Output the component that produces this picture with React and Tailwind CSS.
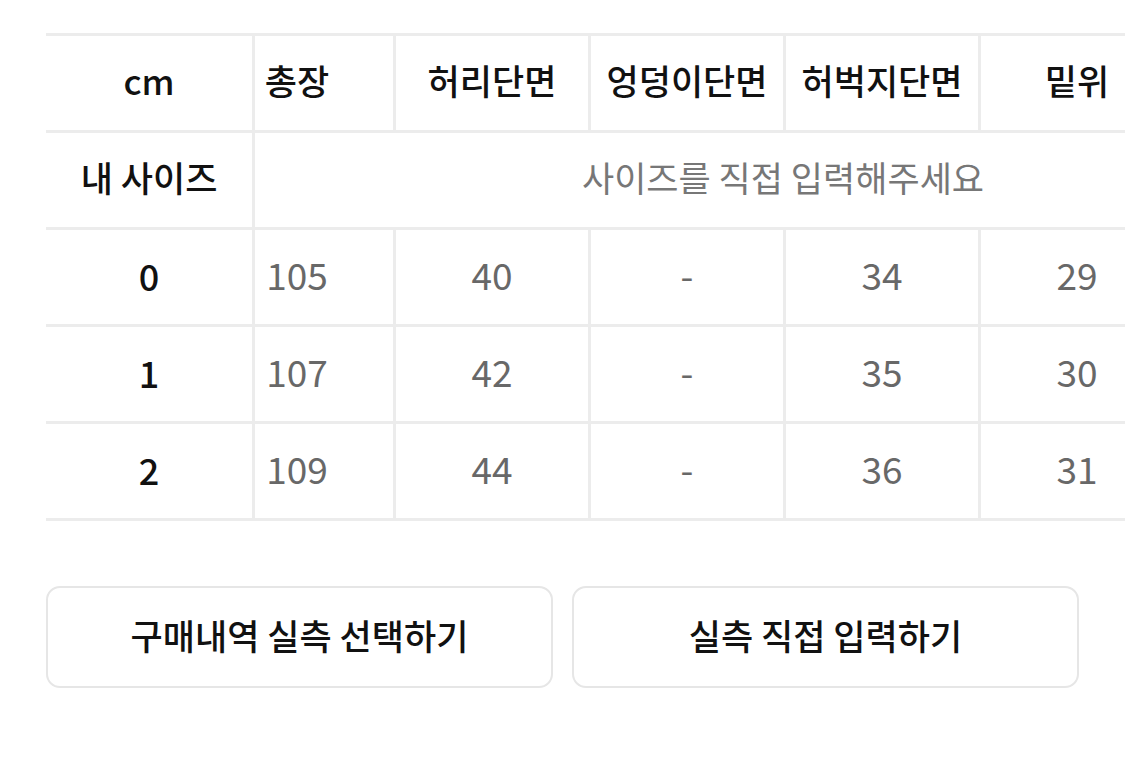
import React from "react";

const columns = ["총장", "허리단면", "엉덩이단면", "허벅지단면", "밑위", "밑단단면"];

const sizes = [
  { name: "0", values: ["105", "40", "-", "34", "29", "20"] },
  { name: "1", values: ["107", "42", "-", "35", "30", "21"] },
  { name: "2", values: ["109", "44", "-", "36", "31", "22"] },
];

export default function App() {
  return (
    <div
      className="w-[1125px] h-[761px] bg-white pt-[33px] overflow-hidden"
      style={{ fontFamily: '"Noto Sans CJK KR", "Noto Sans", sans-serif' }}
    >
      {/* size table: first column sticks, the rest is scrolled a bit */}
      <div className="flex ml-[46px]">
        <div className="w-[209px] shrink-0 border-t-[3px] border-r-[3px] border-[#ececec] text-[35px] font-medium text-[#111]">
          <div className="h-[97px] pb-[5px] border-b-[3px] border-[#ececec] flex items-center justify-center">cm</div>
          <div className="h-[97px] pb-[5px] border-b-[3px] border-[#ececec] flex items-center justify-center">내 사이즈</div>
          {sizes.map((s) => (
            <div key={s.name} className="h-[97px] pb-[5px] border-b-[3px] border-[#ececec] flex items-center justify-center text-[36px]">
              {s.name}
            </div>
          ))}
        </div>

        <div className="flex-1 min-w-0 overflow-hidden border-t-[3px] border-[#ececec]">
          <div className="w-[1170px] -ml-[57px] text-[35px]">
            <div className="flex h-[97px] border-b-[3px] border-[#ececec] font-medium text-[#111]">
              {columns.map((c) => (
                <div key={c} className="w-[195px] pb-[5px] shrink-0 border-l-[3px] border-[#ececec] flex items-center justify-center">
                  {c}
                </div>
              ))}
            </div>
            <div className="h-[97px] pb-[5px] border-b-[3px] border-[#ececec] flex items-center justify-center text-[#777]">
              사이즈를 직접 입력해주세요
            </div>
            {sizes.map((s) => (
              <div key={s.name} className="flex h-[97px] border-b-[3px] border-[#ececec] text-[#686868] text-[37px]">
                {s.values.map((v, i) => (
                  <div key={i} className="w-[195px] pb-[5px] shrink-0 border-l-[3px] border-[#ececec] flex items-center justify-center">
                    {v}
                  </div>
                ))}
              </div>
            ))}
          </div>
        </div>
      </div>

      <div className="flex gap-[19px] px-[46px] mt-[65px]">
        <button className="flex-1 h-[102px] pb-[3px] border-2 border-[#e6e6e6] rounded-[14px] bg-white text-[35px] font-medium text-[#111]">
          구매내역 실측 선택하기
        </button>
        <button className="flex-1 h-[102px] pb-[3px] border-2 border-[#e6e6e6] rounded-[14px] bg-white text-[35px] font-medium text-[#111]">
          실측 직접 입력하기
        </button>
      </div>
    </div>
  );
}
